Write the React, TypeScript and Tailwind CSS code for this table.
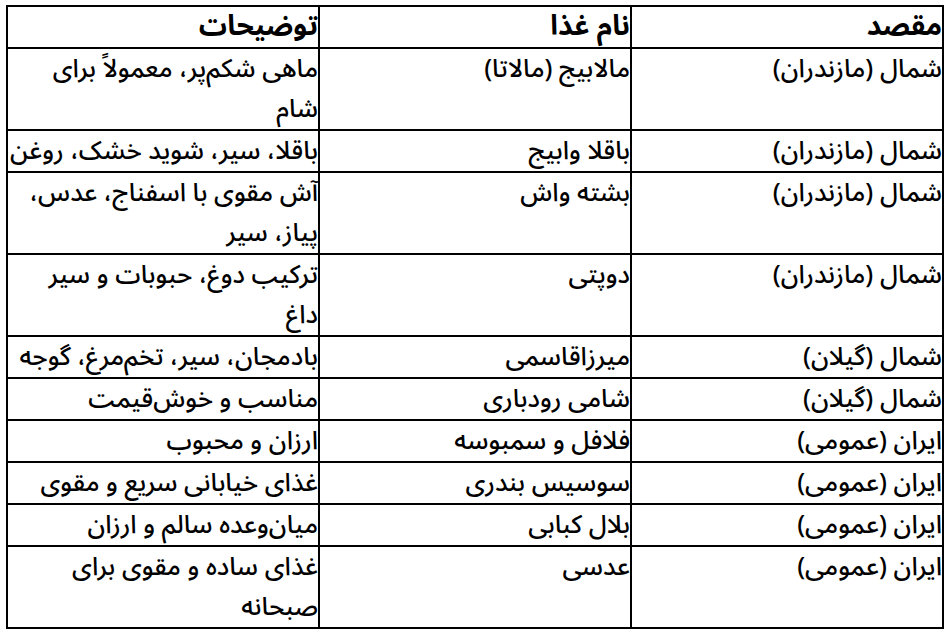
const rows: { dest: string; food: string; desc: string[] }[] = [
  { dest: 'شمال (مازندران)', food: 'مالابیج (مالاتا)', desc: ['ماهی شکم‌پر، معمولاً برای', 'شام'] },
  { dest: 'شمال (مازندران)', food: 'باقلا وابیج', desc: ['باقلا، سیر، شوید خشک، روغن'] },
  { dest: 'شمال (مازندران)', food: 'بشته واش', desc: ['آش مقوی با  اسفناج، عدس،', 'پیاز، سیر'] },
  { dest: 'شمال (مازندران)', food: 'دوپتی', desc: ['ترکیب دوغ، حبوبات و سیر', 'داغ'] },
  { dest: 'شمال (گیلان)', food: 'میرزاقاسمی', desc: ['بادمجان، سیر، تخم‌مرغ، گوجه'] },
  { dest: 'شمال (گیلان)', food: 'شامی رودباری', desc: ['مناسب و خوش‌قیمت'] },
  { dest: 'ایران (عمومی)', food: 'فلافل و سمبوسه', desc: ['ارزان و محبوب'] },
  { dest: 'ایران (عمومی)', food: 'سوسیس بندری', desc: ['غذای خیابانی سریع و مقوی'] },
  { dest: 'ایران (عمومی)', food: 'بلال کبابی', desc: ['میان‌وعده سالم و ارزان'] },
  { dest: 'ایران (عمومی)', food: 'عدسی', desc: ['غذای ساده و مقوی برای', 'صبحانه'] },
];

export default function App() {
  return (
    <div
      className="w-[952px] h-[636px] bg-white pl-[6px] pt-[5px]"
      style={{ fontFamily: '"Noto Sans Arabic", "DejaVu Sans", sans-serif' }}
    >
      <table dir="rtl" className="w-[936px] border-collapse table-fixed text-black text-[25.5px] leading-[40px] font-medium">
        <thead>
          <tr className="text-[28px]">
            <th className="w-[312px] border-2 border-black p-0 text-right align-top font-bold">مقصد</th>
            <th className="w-[312px] border-2 border-black p-0 text-right align-top font-bold">نام غذا</th>
            <th className="w-[312px] border-2 border-black p-0 text-right align-top font-bold">توضیحات</th>
          </tr>
        </thead>
        <tbody>
          {rows.map((r, i) => (
            <tr key={i}>
              <td className="border-2 border-black p-0 text-right align-top whitespace-nowrap">{r.dest}</td>
              <td className="border-2 border-black p-0 text-right align-top whitespace-nowrap">{r.food}</td>
              <td className="border-2 border-black p-0 text-right align-top">
                {r.desc.map((line, j) => (
                  <div key={j} className="whitespace-nowrap">{line}</div>
                ))}
              </td>
            </tr>
          ))}
        </tbody>
      </table>
    </div>
  );
}
